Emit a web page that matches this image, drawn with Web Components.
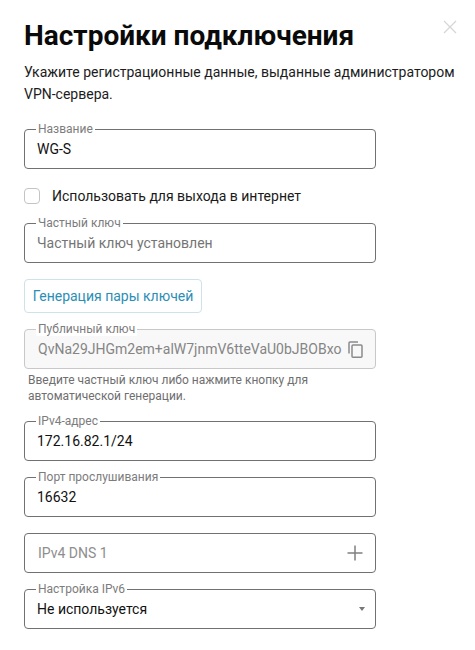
<!DOCTYPE html>
<html lang="ru">
<head>
<meta charset="utf-8">
<title>Настройки подключения</title>
<style>
html, body { margin: 0; background: #fff; font-family: Roboto, "Liberation Sans", sans-serif; }
</style>
</head>
<body>
<connection-dialog>
    <span slot="title">Настройки подключения</span>
    <span slot="desc">Укажите регистрационные данные, выданные администратором VPN-сервера.</span>

    <text-field label="Название" value="WG-S" style="margin-bottom:19px"></text-field>
    <check-row style="margin-bottom:19px">Использовать для выхода в интернет</check-row>
    <text-field label="Частный ключ" value="Частный ключ установлен" muted style="margin-bottom:16px"></text-field>
    <pair-button style="margin-bottom:16px">Генерация пары ключей</pair-button>
    <text-field label="Публичный ключ" value="QvNa29JHGm2em+alW7jnmV6tteVaU0bJBOBxo" disabled icon="copy"></text-field>
    <hint-text style="margin-bottom:17px">Введите частный ключ либо нажмите кнопку для автоматической генерации.</hint-text>
    <text-field label="IPv4-адрес" value="172.16.82.1/24" style="margin-bottom:16px"></text-field>
    <text-field label="Порт прослушивания" value="16632" style="margin-bottom:16px"></text-field>
    <text-field placeholder="IPv4 DNS 1" icon="plus" style="margin-bottom:16px"></text-field>
    <text-field label="Настройка IPv6" value="Не используется" icon="caret"></text-field>
</connection-dialog>

<script>
const ICONS = {
    copy: `<svg width="15" height="17" viewBox="0 0 15 17" fill="none" stroke="#8a8a8a" stroke-width="1.5">
        <path d="M1 12.5V2a1 1 0 0 1 1-1h8"/>
        <rect x="4" y="4" width="10" height="12.2" rx="1"/>
    </svg>`,
    plus: `<svg width="16" height="16" viewBox="0 0 16 16" stroke="#808080" stroke-width="1.5">
        <path d="M8 .5v15M.5 8h15"/>
    </svg>`,
    caret: `<svg width="6" height="4" viewBox="0 0 6 4" style="margin-right:-2px"><path d="M0 0h6L3 4z" fill="#777"/></svg>`
};

customElements.define('connection-dialog', class extends HTMLElement {
    constructor() {
        super();
        this.attachShadow({ mode: 'open' }).innerHTML = `
            <style>
                :host { display: block; position: relative; width: 475px; height: 650px; box-sizing: border-box; padding: 18px 10px 0 24px; color: #000; }
                h1 { margin: 0 0 7px; font: 700 28px/36px Roboto, sans-serif; color: #0a0a0a; }
                p { margin: 0 0 24px; font: 400 14px/22px Roboto, sans-serif; color: #1c1c1c; }
                .form { width: 352px; }
                .close { position: absolute; top: 20px; right: 18px; width: 14px; height: 14px; }
            </style>
            <svg class="close" viewBox="0 0 14 14" stroke="#d6d6d6" stroke-width="1.3"><path d="M1 1l12 12M13 1L1 13"/></svg>
            <h1><slot name="title"></slot></h1>
            <p><slot name="desc"></slot></p>
            <div class="form"><slot></slot></div>
        `;
    }
});

customElements.define('text-field', class extends HTMLElement {
    constructor() {
        super();
        this.attachShadow({ mode: 'open' });
    }

    connectedCallback() {
        const label = this.getAttribute('label');
        const value = this.getAttribute('value');
        const placeholder = this.getAttribute('placeholder');
        const icon = this.getAttribute('icon');
        const classes = [
            this.hasAttribute('disabled') ? 'disabled' : '',
            this.hasAttribute('muted') ? 'muted' : ''
        ].join(' ');
        this.shadowRoot.innerHTML = `
            <style>
                :host { display: block; }
                .box { position: relative; display: flex; align-items: center; height: 40px; box-sizing: border-box; padding: 0 12px; border: 1px solid #717171; border-radius: 4px; background: #fff; }
                .disabled { background: #f8f8f8; border-color: #c8c8c8; }
                .label { position: absolute; top: -8px; left: 11px; padding: 0 2px; font: 400 12px/14px Roboto, sans-serif; color: #7c7c7c; background: #fff; }
                .value { flex: 1; font: 400 14px/20px Roboto, sans-serif; color: #111; white-space: nowrap; }
                .muted .value { color: #757575; }
                .disabled .value { color: #858585; padding-left: 1px; }
                .placeholder { flex: 1; padding-left: 1px; font: 400 14px/20px Roboto, sans-serif; color: #8e8e8e; }
                .icon { display: flex; }
            </style>
            <div class="box ${classes}">
                ${label ? `<span class="label">${label}</span>` : ''}
                ${value ? `<span class="value">${value}</span>` : ''}
                ${placeholder ? `<span class="placeholder">${placeholder}</span>` : ''}
                ${icon ? `<span class="icon">${ICONS[icon]}</span>` : ''}
            </div>
        `;
    }
});

customElements.define('check-row', class extends HTMLElement {
    constructor() {
        super();
        this.attachShadow({ mode: 'open' }).innerHTML = `
            <style>
                :host { display: flex; align-items: center; gap: 12px; height: 16px; font: 400 14px/16px Roboto, sans-serif; color: #1a1a1a; }
                .box { width: 14px; height: 14px; border: 1px solid #c4c4c4; border-radius: 4px; }
            </style>
            <span class="box"></span>
            <slot></slot>
        `;
    }
});

customElements.define('pair-button', class extends HTMLElement {
    constructor() {
        super();
        this.attachShadow({ mode: 'open' }).innerHTML = `
            <style>
                :host { display: block; }
                button { display: block; height: 34px; width: 178px; padding: 0; box-sizing: border-box; border: 1px solid #cfe2ea; border-radius: 4px; background: #fff; font: 400 14px/20px Roboto, sans-serif; color: #2b8eb5; }
            </style>
            <button><slot></slot></button>
        `;
    }
});

customElements.define('hint-text', class extends HTMLElement {
    constructor() {
        super();
        this.attachShadow({ mode: 'open' }).innerHTML = `
            <style>
                :host { display: block; padding: 3px 4px 0; font: 400 12px/16px Roboto, sans-serif; color: #6f6f6f; }
            </style>
            <slot></slot>
        `;
    }
});
</script>
</body>
</html>
